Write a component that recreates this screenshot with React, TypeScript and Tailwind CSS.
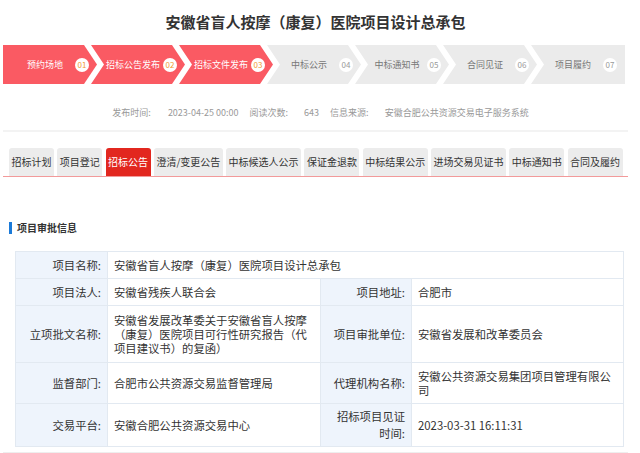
import React from "react";

interface Step {
  label: string;
  no: string;
  done: boolean;
}

const steps: Step[] = [
  { label: "预约场地", no: "01", done: true },
  { label: "招标公告发布", no: "02", done: true },
  { label: "招标文件发布", no: "03", done: true },
  { label: "中标公示", no: "04", done: false },
  { label: "中标通知书", no: "05", done: false },
  { label: "合同见证", no: "06", done: false },
  { label: "项目履约", no: "07", done: false },
];

const tabs = [
  "招标计划",
  "项目登记",
  "招标公告",
  "澄清/变更公告",
  "中标候选人公示",
  "保证金退款",
  "中标结果公示",
  "进场交易见证书",
  "中标通知书",
  "合同及履约",
];

const clipFirst =
  "[clip-path:polygon(0_0,calc(100%-13px)_0,100%_50%,calc(100%-13px)_100%,0_100%)]";
const clipMid =
  "[clip-path:polygon(0_0,calc(100%-13px)_0,100%_50%,calc(100%-13px)_100%,0_100%,13px_50%)]";
const clipLast = "[clip-path:polygon(0_0,100%_0,100%_100%,0_100%,13px_50%)]";

function StepBar() {
  return (
    <div className="flex h-[39px]">
      {steps.map((s, i) => {
        const clip = i === 0 ? clipFirst : i === steps.length - 1 ? clipLast : clipMid;
        return (
          <div
            key={s.no}
            className={`flex h-full w-[94px] shrink-0 items-center ${i > 0 ? "-ml-[6px]" : ""} ${clip} ${
              s.done ? "bg-[#fa5a63] text-white" : "bg-[#ebebeb] text-[#777]"
            }`}
          >
            <span className="ml-[12px] w-[60px] text-center text-[9px] leading-none whitespace-nowrap">
              {s.label}
            </span>
            <span
              className={`flex h-[14px] w-[14px] items-center justify-center rounded-full bg-white text-[8px] leading-none ${
                s.done ? "text-[#f29a33]" : "text-[#999]"
              }`}
            >
              {s.no}
            </span>
          </div>
        );
      })}
    </div>
  );
}

function Meta() {
  return (
    <div className="mt-[12px] flex h-[34px] items-center justify-center pl-[10px] text-[9px] text-[#999]">
      <span className="mr-[17px]">发布时间:</span>
      <span className="mr-[11px]">2023-04-25 00:00</span>
      <span className="mr-[16px]">阅读次数:</span>
      <span className="mr-[11px]">643</span>
      <span className="mr-[16px]">信息来源:</span>
      <span>安徽合肥公共资源交易电子服务系统</span>
    </div>
  );
}

function Tabs() {
  return (
    <div className="mt-[16px] border-b border-[#f29a9a]">
      <div className="ml-[6px] flex gap-[3.3px]">
        {tabs.map((t, i) => (
          <div
            key={t}
            className={`flex h-[28px] items-center rounded-t-[3px] px-[2.5px] text-[10px] leading-none whitespace-nowrap ${
              i === 2 ? "bg-[#e2271f] text-white" : "bg-[#ececec] text-[#333]"
            }`}
          >
            {t}
          </div>
        ))}
      </div>
    </div>
  );
}

const th =
  "border border-[#e2e9f1] bg-[#eef4fc] px-[6px] py-[4px] text-right align-middle font-normal leading-[17px]";
const td = "border border-[#e2e9f1] px-[6px] py-[6px] text-left align-middle leading-[14px]";

function ApprovalTable() {
  return (
    <table className="ml-[12px] w-[608px] table-fixed border-collapse text-[11.35px] text-[#333]">
      <colgroup>
        <col className="w-[92px]" />
        <col className="w-[213px]" />
        <col className="w-[91px]" />
        <col className="w-[212px]" />
      </colgroup>
      <tbody>
        <tr>
          <th className={th}>项目名称:</th>
          <td className={td} colSpan={3}>
            安徽省盲人按摩（康复）医院项目设计总承包
          </td>
        </tr>
        <tr>
          <th className={th}>项目法人:</th>
          <td className={td}>安徽省残疾人联合会</td>
          <th className={th}>项目地址:</th>
          <td className={td}>合肥市</td>
        </tr>
        <tr>
          <th className={th}>立项批文名称:</th>
          <td className={`${td} py-[7px]`}>
            安徽省发展改革委关于安徽省盲人按摩（康复）医院项目可行性研究报告（代项目建议书）的复函）
          </td>
          <th className={th}>项目审批单位:</th>
          <td className={td}>安徽省发展和改革委员会</td>
        </tr>
        <tr>
          <th className={th}>监督部门:</th>
          <td className={td}>合肥市公共资源交易监督管理局</td>
          <th className={th}>代理机构名称:</th>
          <td className={td}>安徽公共资源交易集团项目管理有限公司</td>
        </tr>
        <tr>
          <th className={th}>交易平台:</th>
          <td className={td}>安徽合肥公共资源交易中心</td>
          <th className={th}>
            招标项目见证
            <br />
            时间:
          </th>
          <td className={td}>2023-03-31 16:11:31</td>
        </tr>
      </tbody>
    </table>
  );
}

export default function App() {
  return (
    <div
      className="h-[453px] w-[640px] overflow-hidden bg-white"
      style={{ fontFamily: '"Noto Sans CJK SC", "Liberation Sans", sans-serif' }}
    >
      <div className="ml-[3px] w-[625px]">
        <h1 className="flex h-[45px] items-center justify-center pb-[1px] text-[15px] font-bold text-[#333]">
          安徽省盲人按摩（康复）医院项目设计总承包
        </h1>
        <StepBar />
        <Meta />
        <div className="h-[2px] bg-[#f3f3f3]" />
        <Tabs />

        <div className="mt-[45px] ml-[6px] flex items-center gap-[5px]">
          <span className="h-[12px] w-[3px] bg-[#1b7ad8]" />
          <span className="text-[10px] font-bold leading-none text-[#333]">项目审批信息</span>
        </div>

        <div className="mt-[17px]">
          <ApprovalTable />
        </div>
        <div className="mt-[5px] h-[1px] bg-[#eeeeee]" />
      </div>
    </div>
  );
}
